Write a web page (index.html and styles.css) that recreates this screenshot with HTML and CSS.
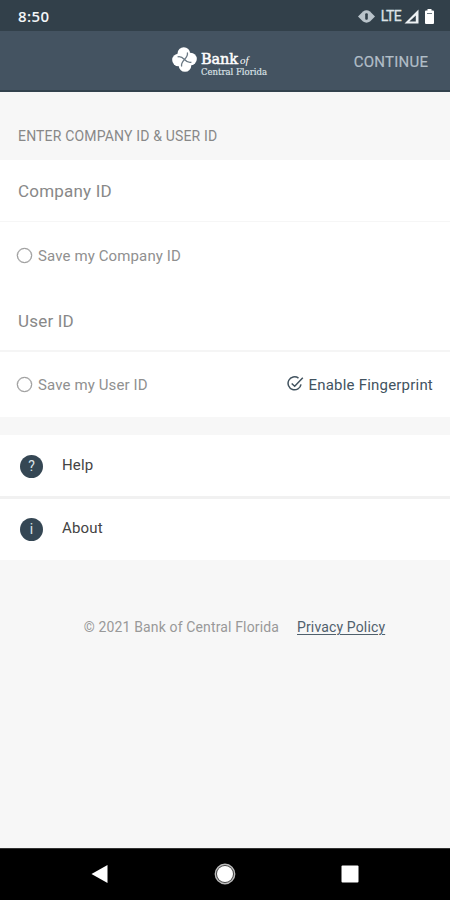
FILE: index.html
```html
<!DOCTYPE html>
<html lang="en">
<head>
<meta charset="utf-8">
<title>Bank of Central Florida</title>
<link rel="stylesheet" href="styles.css">
</head>
<body>
<div class="status">
  <span class="clock">8:50</span>
  <div class="signals">
    <svg class="vibrate" width="17" height="13" viewBox="0 0 17 13"><path d="M0 6.500 5 1.500Q8.500-.8 12 1.500L17 6.500 12 11.500Q8.500 13.800 5 11.500Z" fill="#b9c3ca"/><rect x="7.200" y="3.300" width="2.600" height="6.400" rx="1" fill="#32404a"/></svg>
    <span class="lte">LTE</span>
    <svg class="signal" width="15" height="15" viewBox="0 0 15 15"><path fill="#edf1f3" fill-rule="evenodd" d="M14.500.5V14.500H.5ZM11.800 6.500 5.300 12.600H11.800Z"/></svg>
    <svg class="battery" width="9" height="15" viewBox="0 0 9 15"><path fill="#fff" d="M2.500 0h4v1.500H8q1 0 1 1V14q0 1-1 1H1q-1 0-1-1V2.500q0-1 1-1h1.500Z"/><path d="M2 4.500h5" stroke="#6e7b84"/></svg>
  </div>
</div>
<header class="header">
  <div class="logo">
    <svg width="25" height="25" viewBox="0 0 25 25"><g fill="#fff"><circle cx="11.800" cy="6.500" r="6.300"/><circle cx="6.500" cy="13" r="6.300"/><circle cx="13" cy="18.500" r="6.300"/><circle cx="18.500" cy="12" r="6.300"/></g><path d="M12.500 12.500C10 9.800 8.200 9 5.600 9.800M12.500 12.500C15 9.800 16.200 8 15.300 5.500M12.500 12.500C15 15.200 17 16 19.400 15.200M12.500 12.500C10 15.200 8.800 17 9.700 19.500" fill="none" stroke="#6b7984" stroke-width="1.300"/></svg>
    <div class="brand"><div class="brand-top">Bank<i>of</i></div><div class="brand-bottom">Central Florida</div></div>
  </div>
  <span class="continue">CONTINUE</span>
</header>
<main>
  <h1 class="section">ENTER COMPANY ID &amp; USER ID</h1>
  <section class="form">
    <div class="field company">Company ID</div>
    <div class="save save-company"><span class="option"><i class="radio"></i>Save my Company ID</span></div>
    <div class="field user">User ID</div>
    <div class="save save-user"><span class="option"><i class="radio"></i>Save my User ID</span>
      <span class="finger"><svg width="17" height="17" viewBox="0 0 17 17" fill="none" stroke="#42535f" stroke-width="1.500"><path d="M11.500 2.100A6.500 6.500 0 1 0 14 8.300M4.700 7.500 7.700 10.300 15.800 1.700"/></svg>Enable Fingerprint</span></div>
  </section>
  <nav class="links">
    <div class="row"><span class="badge">?</span><span class="label">Help</span></div>
    <div class="row"><span class="badge info">i</span><span class="label">About</span></div>
  </nav>
  <footer class="footer"><span class="copy">© 2021 Bank of Central Florida</span><span class="policy">Privacy Policy</span></footer>
</main>
<div class="navbar">
  <svg width="17" height="20" viewBox="0 0 17 20"><path d="M16.500 1V19L.5 10Z" fill="#fff"/></svg>
  <svg width="22" height="22" viewBox="0 0 22 22"><circle cx="11" cy="11" r="9.700" fill="#444" stroke="#bbb" stroke-width="1.400"/><circle cx="11" cy="11" r="8" fill="#fff"/></svg>
  <svg width="18" height="18" viewBox="0 0 18 18"><rect x=".5" y=".5" width="17" height="17" rx="1" fill="#fff"/></svg>
</div>
</body>
</html>
```
FILE: styles.css
```css
* { box-sizing: border-box; }
body { margin: 0; width: 450px; height: 900px; display: flex; flex-direction: column; overflow: hidden; background: #f7f7f7; font-family: Roboto, sans-serif; white-space: nowrap; color: #888; }
svg { display: block; flex: none; }
.status { height: 31px; flex: none; background: #32404a; color: #f3f6f8; display: flex; justify-content: space-between; align-items: center; padding: 1px 16px 0 18px; }
.clock { font: 600 15px "Open Sans", sans-serif; letter-spacing: .4px; }
.signals { display: flex; align-items: center; }
.lte { font-size: 14px; letter-spacing: -.6px; margin: 0 3px 0 6px; color: #dce2e6; -webkit-text-stroke: .3px; }
.battery { margin-left: 6px; }
.header { height: 61px; flex: none; background: #445361; border-bottom: 2px solid #33424e; display: flex; align-items: center; justify-content: space-between; padding: 2px 22px 0 172px; }
.logo { display: flex; align-items: flex-start; color: #fff; gap: 4px; padding-top: 1px; }
.brand { font-family: "DejaVu Serif", serif; padding-top: 5px; }
.brand-top { font-size: 14.500px; line-height: 15px; -webkit-text-stroke: .5px; letter-spacing: -.1px; }
.brand-top i { font-family: "Liberation Serif", serif; font-size: 11px; margin-left: 2px; -webkit-text-stroke: 0; }
.brand-bottom { font-size: 8.500px; line-height: 9px; color: #dbe1e6; -webkit-text-stroke: .2px; }
.continue { font-size: 15px; letter-spacing: .25px; margin-right: -.25px; color: #b2bec8; -webkit-text-stroke: .2px; padding-top: 1px; }
main { flex: 1; }
.section { margin: 0; height: 68px; padding: 34px 18px 0; font-size: 14px; letter-spacing: .17px; line-height: 20px; font-weight: 400; }
.form { background: #fff; height: 257px; }
.field { font-size: 17px; letter-spacing: .2px; padding: 1px 18px 0; display: flex; align-items: center; height: 62px; border-bottom: 1px solid #f6f6f6; }
.user { border-bottom: 2px solid #f5f5f5; }
.save { display: flex; align-items: center; justify-content: space-between; padding: 0 17px; font-size: 15px; letter-spacing: .12px; color: #909090; }
.save-company { height: 68px; }
.save-user { height: 65px; padding-top: 1px; }
.option { display: flex; align-items: center; gap: 6px; }
.radio { width: 15px; height: 15px; margin-top: -1px; border: 1.500px solid #8c8c8c; border-radius: 50%; box-shadow: 0 0 0 .3px #aaa; }
.finger { display: flex; align-items: center; gap: 4px; letter-spacing: .21px; color: #42535f; }
.finger svg { margin-top: -1px; }
.links { margin-top: 18px; display: grid; grid-template-rows: 61px 61px; gap: 3px; background: #f1f1f1; }
.row { background: #fff; display: flex; align-items: center; padding-left: 20px; gap: 19px; }
.badge { width: 23px; height: 23px; margin-top: 1px; border-radius: 50%; background: #354754; color: #dce4e9; font-size: 14px; line-height: 23px; text-align: center; }
.info { margin-top: -1px; }
.label { font-size: 15px; letter-spacing: .15px; color: #444; margin-top: -2px; }
.info + .label { margin-top: -4px; }
.footer { display: flex; justify-content: center; gap: 18px; padding: 57px 0 0 19px; font-size: 14px; letter-spacing: .14px; line-height: 20px; color: #999; }
.policy { color: #50606c; text-decoration: underline; text-decoration-thickness: 1px; text-underline-offset: 2px; }
.navbar { height: 52px; flex: none; background: #000; border-top: 1px solid #333; display: flex; align-items: center; justify-content: space-between; padding: 0 91px 2px; }
```
